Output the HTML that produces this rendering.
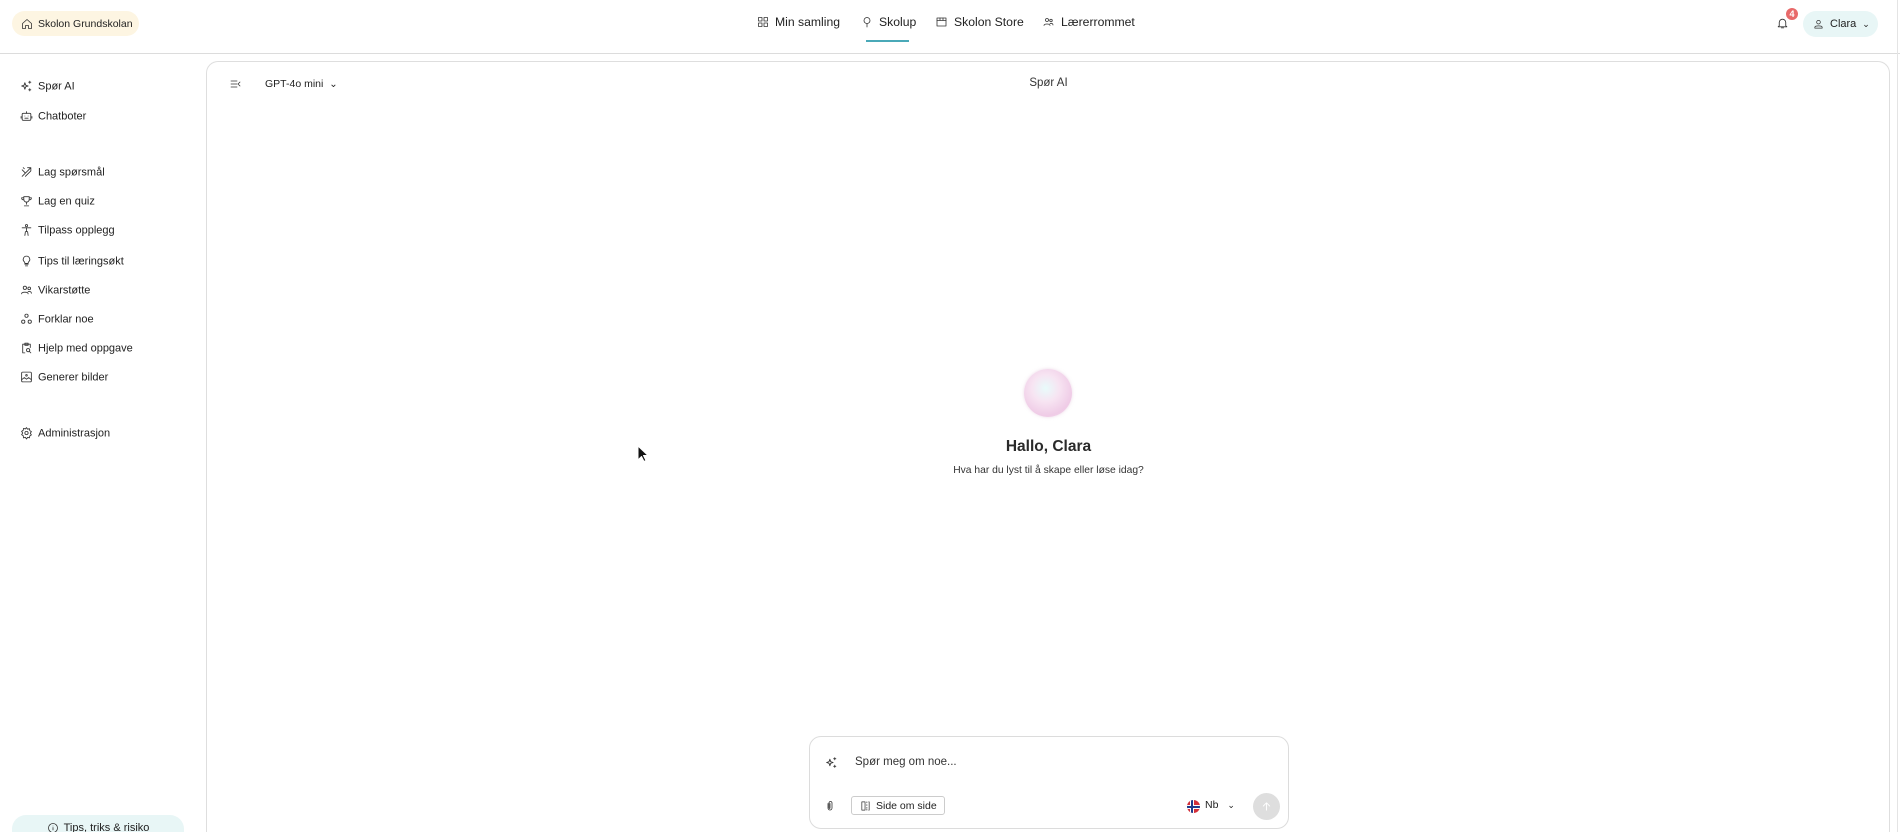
<!DOCTYPE html>
<html style="overflow:hidden;height:832px"><head><meta charset="utf-8"><style>
*{box-sizing:border-box;margin:0;padding:0}
html,body{width:1900px;height:832px;overflow:hidden}
body{background:#fff;font-family:"Liberation Sans",sans-serif;color:#222;position:relative}
.a{position:absolute}
svg{fill:none;stroke:#333;stroke-width:1.6;stroke-linecap:round;stroke-linejoin:round}
.nav{font-size:12.2px;color:#222;display:flex;align-items:center;gap:6px;white-space:nowrap}
.side{position:absolute;left:20px;font-size:11px;color:#222;display:flex;align-items:center;gap:5px;transform:translateY(-50%);white-space:nowrap}
.side svg{width:13px;height:13px}
</style></head><body>
<!-- header -->
<div class="a" style="left:12px;top:11px;width:127px;height:25px;border-radius:13px;background:#fdf5e2;font-size:10.5px;display:flex;align-items:center;gap:5px;padding-left:9px;white-space:nowrap">
<svg width="12" height="12" viewBox="0 0 24 24"><path d="M3 11l9-8 9 8v10h-6v-6H9v6H3z"/></svg>Skolon Grundskolan</div>
<div class="a nav" style="left:757px;top:15px"><svg width="12" height="12" viewBox="0 0 24 24"><rect x="3" y="3" width="7" height="7"/><rect x="14" y="3" width="7" height="7"/><rect x="3" y="14" width="7" height="7"/><rect x="14" y="14" width="7" height="7"/></svg>Min samling</div>
<div class="a nav" style="left:861px;top:15px"><svg width="12" height="12" viewBox="0 0 24 24"><circle cx="12" cy="9" r="6"/><path d="M12 15v7"/></svg>Skolup</div>
<div class="a" style="left:866px;top:40px;width:43px;height:2px;background:#4aa9b8"></div>
<div class="a nav" style="left:935px;top:15px"><svg width="13" height="12" viewBox="0 0 24 24"><rect x="3" y="4" width="18" height="16"/><path d="M3 9h18M9 4v5M15 4v5"/></svg>Skolon Store</div>
<div class="a nav" style="left:1042px;top:15px"><svg width="13" height="12" viewBox="0 0 24 24"><circle cx="9" cy="8" r="3"/><circle cx="17" cy="9" r="2.5"/><path d="M3 19c0-4 12-4 12 0M15 15c3-1 6 0 6 3"/></svg>Lærerrommet</div>
<svg class="a" style="left:1776px;top:16px" width="13" height="14" viewBox="0 0 24 24"><path d="M6 17V11a6 6 0 0112 0v6l2 2H4zM10 21h4"/></svg>
<div class="a" style="left:1786px;top:8px;width:12px;height:12px;border-radius:6px;background:#e86a6a;color:#fff;font-size:9px;text-align:center;line-height:12px;font-weight:bold">4</div>
<div class="a" style="left:1803px;top:11px;width:75px;height:26px;border-radius:13px;background:#e8f6f6;font-size:11px;display:flex;align-items:center;gap:6px;padding-left:10px">
<svg width="11" height="12" viewBox="0 0 24 24"><circle cx="12" cy="8" r="4"/><path d="M4 21v-2c0-4 16-4 16 0v2z"/></svg>Clara<span style="font-size:9px">⌄</span></div>
<div class="a" style="left:0;top:53px;width:1900px;height:1px;background:#dcdcdc"></div>
<div class="a" style="left:1897px;top:0;width:1px;height:832px;background:#e4e4e4"></div>
<!-- sidebar -->
<div class="side" style="top:86px"><svg viewBox="0 0 24 24"><path d="M9 6l1.5 4.5L15 12l-4.5 1.5L9 18l-1.5-4.5L3 12l4.5-1.5zM18 3v4M16 5h4M18 17v4M16 19h4"/></svg>Spør AI</div>
<div class="side" style="top:116px"><svg viewBox="0 0 24 24"><rect x="4" y="7" width="16" height="13" rx="2"/><path d="M9 12h.01M15 12h.01M9 16h6M12 7V4M2 13v3M22 13v3"/></svg>Chatboter</div>
<div class="side" style="top:172px"><svg viewBox="0 0 24 24"><path d="M4 20L20 4M6 4l2 2M4 8l6 6M10 20l10-10M14 4h6v6"/></svg>Lag spørsmål</div>
<div class="side" style="top:201px"><svg viewBox="0 0 24 24"><path d="M7 4h10v5a5 5 0 01-10 0zM7 6H3c0 3 2 4 4 4M17 6h4c0 3-2 4-4 4M12 14v4M8 21h8"/></svg>Lag en quiz</div>
<div class="side" style="top:230px"><svg viewBox="0 0 24 24"><circle cx="12" cy="4" r="2"/><path d="M4 8h16M12 8v7M9 22l1-7h4l1 7"/></svg>Tilpass opplegg</div>
<div class="side" style="top:261px"><svg viewBox="0 0 24 24"><path d="M9 18h6M10 21h4M12 3a6 6 0 00-4 10.5c1 1 1 2 1 3h6c0-1 0-2 1-3A6 6 0 0012 3z"/></svg>Tips til læringsøkt</div>
<div class="side" style="top:290px"><svg viewBox="0 0 24 24"><circle cx="9" cy="8" r="3"/><circle cx="17" cy="9" r="2.5"/><path d="M3 19c0-4 12-4 12 0M15 15c3-1 6 0 6 3"/></svg>Vikarstøtte</div>
<div class="side" style="top:319px"><svg viewBox="0 0 24 24"><circle cx="12" cy="6" r="3"/><circle cx="6" cy="17" r="3"/><circle cx="18" cy="17" r="3"/></svg>Forklar noe</div>
<div class="side" style="top:348px"><svg viewBox="0 0 24 24"><path d="M9 21H5V5h14v6M9 3h6v4H9z"/><circle cx="15" cy="16" r="3"/><path d="M17 18l3 3"/></svg>Hjelp med oppgave</div>
<div class="side" style="top:377px"><svg viewBox="0 0 24 24"><rect x="3" y="3" width="18" height="18" rx="2"/><path d="M3 17l5-4 4 3 4-3 5 4"/><circle cx="12" cy="9" r="1.5"/></svg>Generer bilder</div>
<div class="side" style="top:433px"><svg viewBox="0 0 24 24"><circle cx="12" cy="12" r="3"/><path d="M12 2l2 3 3.5-1 .5 3.5 3 2-2 3 2 3-3 2-.5 3.5-3.5-1-2 3-2-3-3.5 1L6 17l-3-2 2-3-2-3 3-2 .5-3.5 3.5 1z"/></svg>Administrasjon</div>
<div class="a" style="left:12px;top:815px;width:172px;height:17px;border-radius:14px 14px 0 0;background:#e8f6f6;font-size:11px;display:flex;justify-content:center;padding-top:7px;gap:5px;overflow:hidden;white-space:nowrap"><svg width="12" height="12" viewBox="0 0 24 24"><circle cx="12" cy="12" r="9"/><path d="M12 8v.01M12 11v5"/></svg>Tips, triks &amp; risiko</div>
<!-- main panel -->
<div class="a" style="left:206px;top:61px;width:1684px;height:771px;border:1px solid #dedede;border-bottom:none;border-radius:12px 12px 0 0"></div>
<svg class="a" style="left:229px;top:78px" width="13" height="12" viewBox="0 0 24 24"><path d="M3 6h12M3 12h12M3 18h12M21 8l-4 4 4 4"/></svg>
<div class="a" style="left:265px;top:78px;font-size:10.5px;white-space:nowrap">GPT-4o mini <span style="margin-left:3px;font-size:10px">⌄</span></div>
<div class="a" style="left:0;top:77px;width:2097px;text-align:center;font-size:11.5px;color:#333">Spør AI</div>
<div class="a" style="left:1024px;top:369px;width:48px;height:48px;border-radius:50%;background:radial-gradient(circle at 45% 40%,#e8fbfb 0%,#f7e4f2 35%,#efcbe6 70%,#f5e3ef 100%);box-shadow:0 0 3px rgba(220,180,210,.5)"></div>
<div class="a" style="left:0;top:438px;width:2097px;text-align:center;font-size:15.5px;font-weight:bold;color:#2a2a2a">Hallo, Clara</div>
<div class="a" style="left:0;top:465px;width:2097px;text-align:center;font-size:10.3px;color:#333">Hva har du lyst til å skape eller løse idag?</div>
<!-- cursor -->
<svg class="a" style="left:637px;top:445px" width="12" height="18" viewBox="0 0 12 18"><path d="M1 1v14l3.5-3.5 2.5 5 2-1-2.5-5H11z" fill="#111" stroke="#fff" stroke-width="1"/></svg>
<!-- input -->
<div class="a" style="left:809px;top:736px;width:480px;height:93px;border:1px solid #dcdcdc;border-radius:12px"></div>
<svg class="a" style="left:825px;top:756px" width="13" height="13" viewBox="0 0 24 24"><path d="M9 6l1.5 4.5L15 12l-4.5 1.5L9 18l-1.5-4.5L3 12l4.5-1.5zM18 3v4M16 5h4M18 17v4M16 19h4"/></svg>
<div class="a" style="left:855px;top:756px;font-size:11.5px;color:#333">Spør meg om noe...</div>
<svg class="a" style="left:824px;top:799px" width="12" height="14" viewBox="0 0 24 24"><path d="M8 7v9a4 4 0 008 0V6a3 3 0 00-6 0v10a1 1 0 002 0V7"/></svg>
<div class="a" style="left:851px;top:796px;width:94px;height:19px;border:1px solid #ccc;border-radius:3px;font-size:10.5px;display:flex;align-items:center;gap:5px;padding-left:8px;white-space:nowrap"><svg width="11" height="12" viewBox="0 0 24 24"><path d="M11 3H4v18h7zM15 3v2M15 9v2M15 15v2M15 19v2M19 3h1v18h-1"/></svg>Side om side</div>
<div class="a" style="left:1187px;top:800px;width:13px;height:13px;border-radius:50%;background:#d4303a;overflow:hidden"><div style="position:absolute;left:3px;top:0;width:4px;height:13px;background:#fff"></div><div style="position:absolute;left:0;top:4.5px;width:13px;height:4px;background:#fff"></div><div style="position:absolute;left:4px;top:0;width:2px;height:13px;background:#1f3b8c"></div><div style="position:absolute;left:0;top:5.5px;width:13px;height:2px;background:#1f3b8c"></div></div>
<div class="a" style="left:1205px;top:799px;font-size:10.5px;white-space:nowrap">Nb <span style="margin-left:6px;font-size:9px">⌄</span></div>
<div class="a" style="left:1253px;top:793px;width:27px;height:27px;border-radius:50%;background:#dedede;display:flex;align-items:center;justify-content:center"><svg width="11" height="11" viewBox="0 0 24 24" style="stroke:#fff;stroke-width:2"><path d="M12 20V4M5 11l7-7 7 7"/></svg></div>
</body></html>
